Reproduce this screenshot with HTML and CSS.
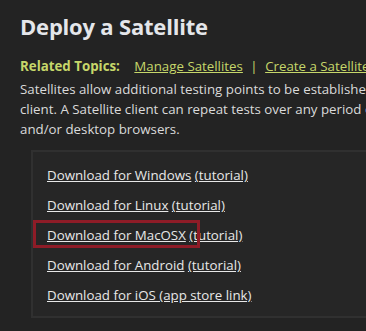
FILE: index.html
```html
<!DOCTYPE html>
<html lang="en">
<head>
  <meta charset="UTF-8" />
  <title>Deploy a Satellite</title>
  <link rel="stylesheet" href="styles.css">
</head>
<body>
  <div class="page">
    <h1>Deploy a Satellite</h1>
    <div class="related">
      <span class="label">Related Topics:</span>
      <a href="#">Manage Satellites</a>
      <span class="sep">|</span>
      <a href="#">Create a Satellite Test</a>
    </div>
    <p class="intro">Satellites allow additional testing points to be established using a downloadable<br>client. A Satellite client can repeat tests over any period of time on mobile<br>and/or desktop browsers.</p>

    <div class="downloads">
      <div class="row"><a href="#">Download for Windows</a> <a href="#">(tutorial)</a></div>
      <div class="row"><a href="#">Download for Linux</a> <a href="#">(tutorial)</a></div>
      <!-- red callout drawn over this row -->
      <div class="row highlight"><a href="#">Download for MacOSX</a> <a href="#">(tutorial)</a></div>
      <div class="row"><a href="#">Download for Android</a> <a href="#">(tutorial)</a></div>
      <div class="row"><a href="#">Download for iOS (app store link)</a></div>
    </div>
  </div>
</body>
</html>
```

FILE: styles.css
```css
body {
  margin: 0;
  background: #232323;
  color: #dcdcdc;
  font-family: 'Open Sans', 'Noto Sans', sans-serif;
  overflow: hidden;
}

.page {
  padding: 12px 0 0 20px;
  width: 560px;
}

h1 {
  margin: 0;
  font-size: 22px;
  font-weight: 700;
  color: #e4e6ea;
  line-height: 28px;
  letter-spacing: -0.2px;
}

.related {
  margin-top: 16px;
  font-size: 13.3px;
  line-height: 20px;
  color: #c6d76a;
  white-space: nowrap;
}

.related .label {
  font-weight: 700;
  margin-right: 11px;
}

.related a {
  color: #c6d76a;
}

.related .sep {
  margin: 0 4px;
}

.intro {
  margin: 3px 0 0;
  font-size: 13.3px;
  line-height: 20px;
  color: #dadada;
  white-space: nowrap;
}

.downloads {
  margin: 11px 0 0 11px;
  padding: 9px 0 7px 0;
  background: #262626;
  border: 2px solid #303030;
  border-right: none;
}

.row {
  position: relative;
  font-size: 13.3px;
  line-height: 22px;
  padding: 3px 0 3px 14px;
  margin-bottom: 2px;
  white-space: nowrap;
}

.row:last-child {
  margin-bottom: 0;
}

.row a {
  color: #e8e8e8;
}

.row.highlight::after {
  content: "";
  position: absolute;
  left: 0;
  top: -1px;
  width: 161px;
  height: 22px;
  border: 3px solid #8e1c27;
}
```
